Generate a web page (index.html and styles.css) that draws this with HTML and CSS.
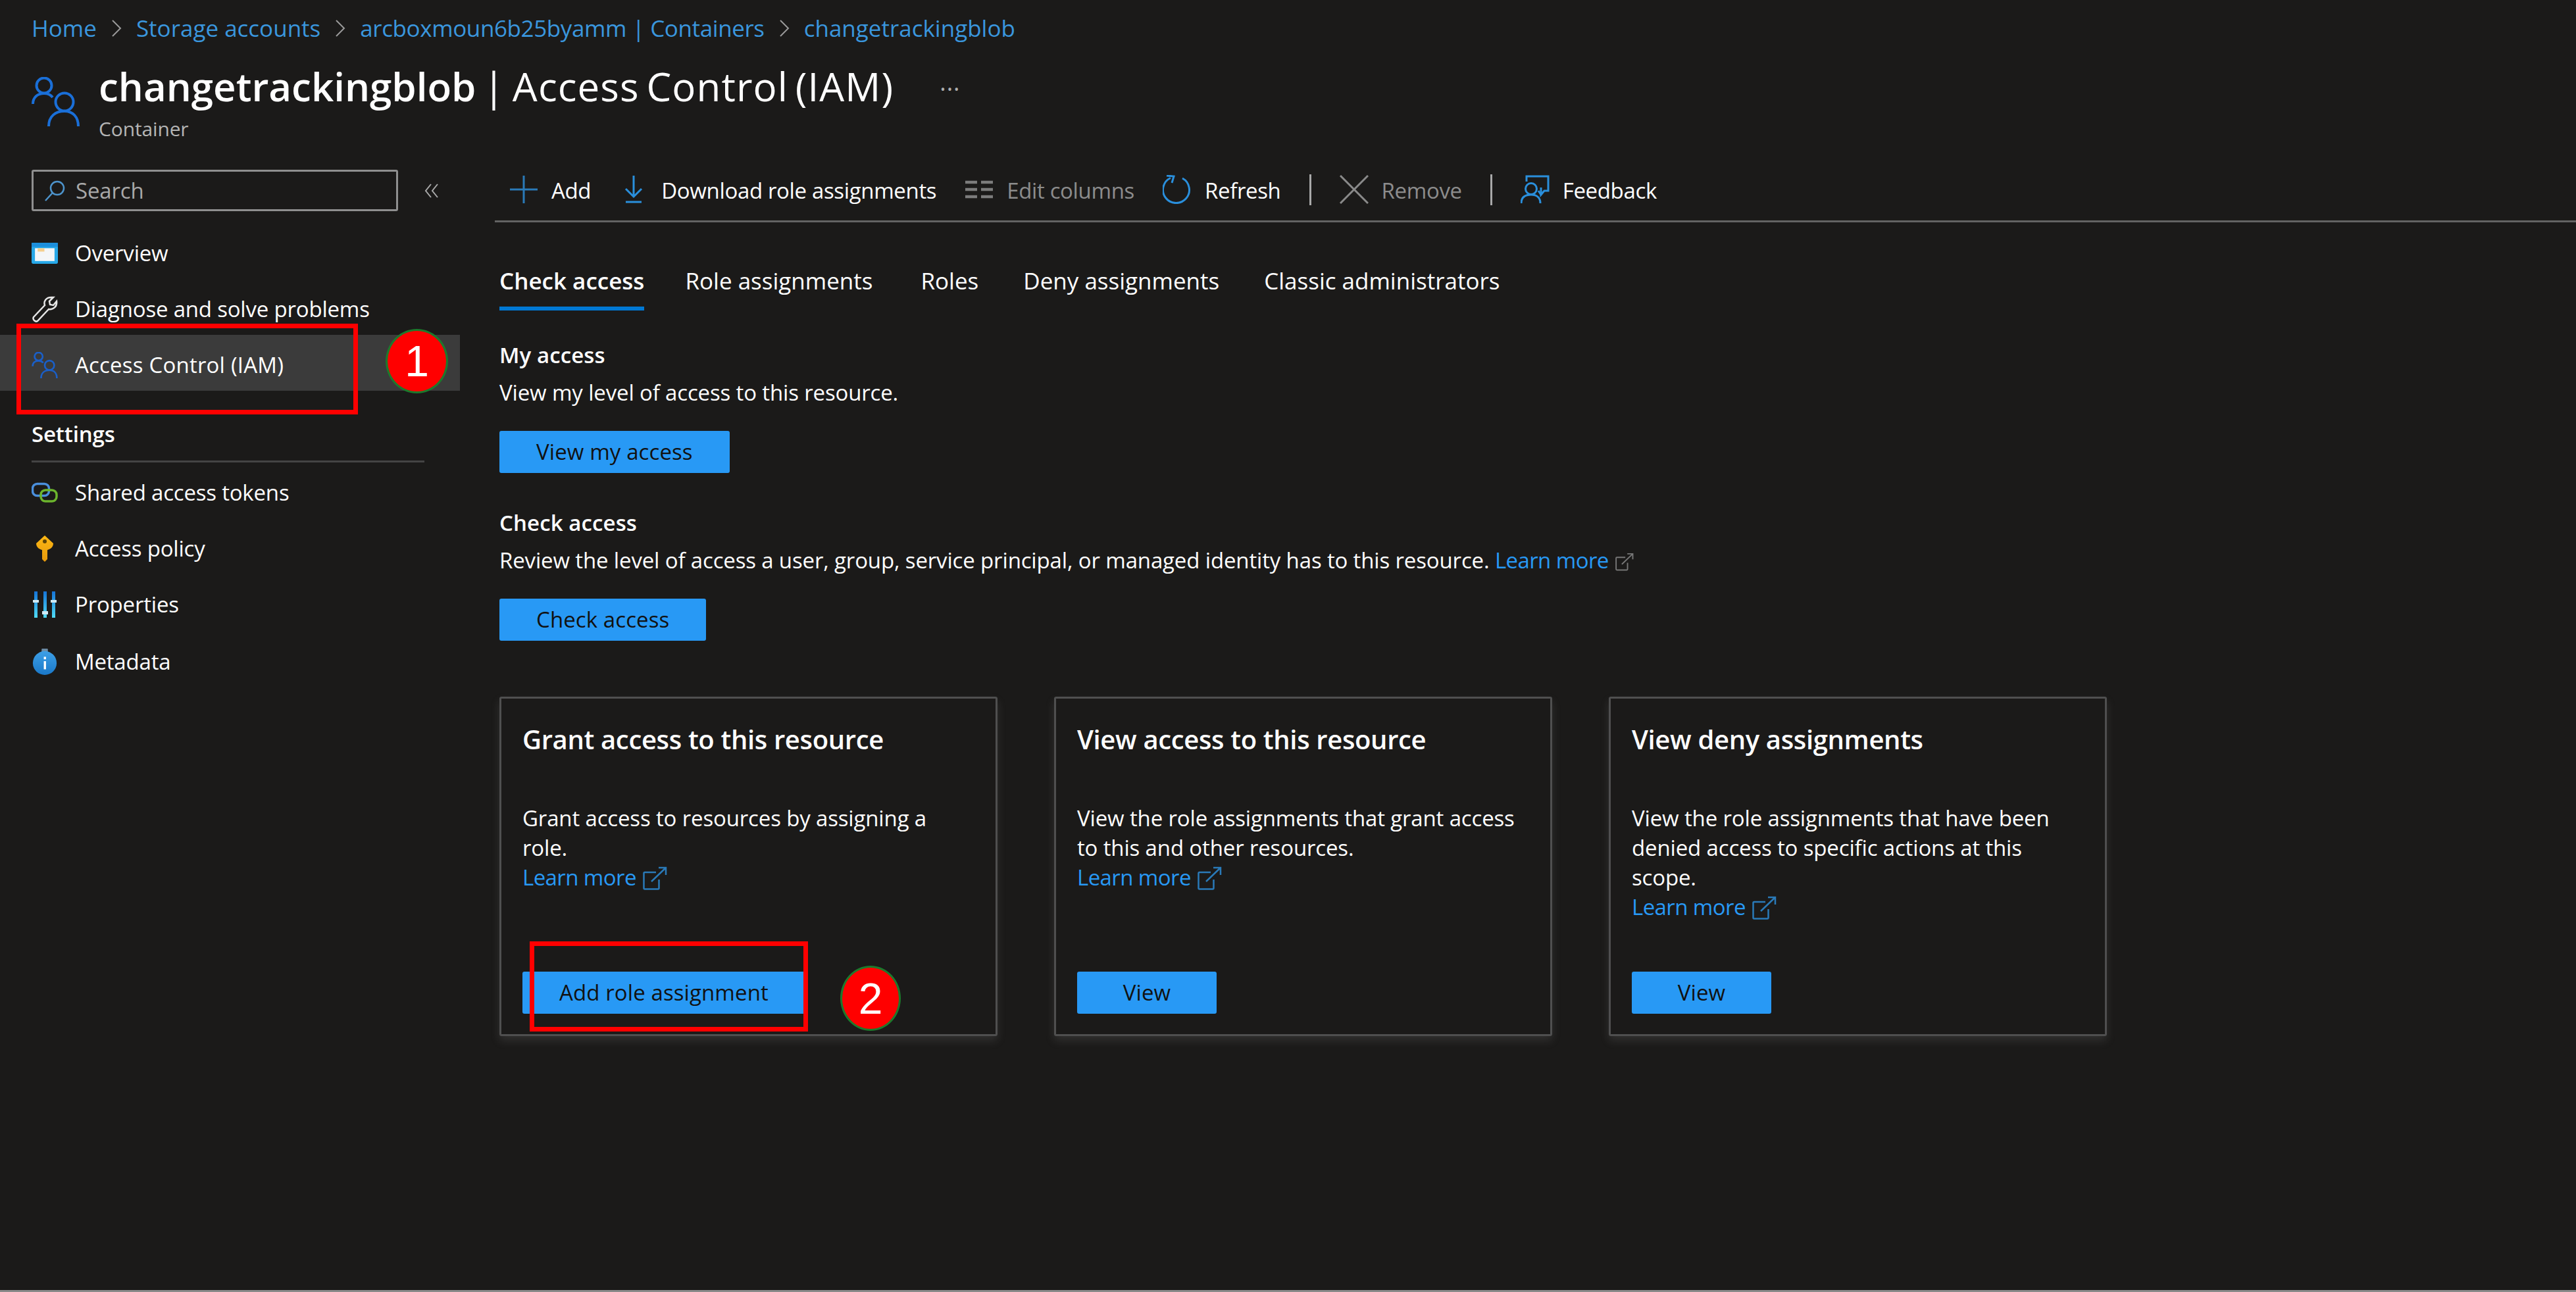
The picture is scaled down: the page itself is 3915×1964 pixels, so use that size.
FILE: index.html
```html
<!DOCTYPE html>
<html lang="en">
<head>
<meta charset="utf-8">
<title>changetrackingblob | Access Control (IAM)</title>
<link rel="stylesheet" href="styles.css">
</head>
<body>
<svg class="defs" width="0" height="0" aria-hidden="true">
  <defs>
    <symbol id="people" viewBox="0 0 73 75">
      <circle cx="19" cy="13" r="11.5"/>
      <path d="M2 41C2 31 9 25 19 25C25 25 29 27 32 31"/>
      <circle cx="50" cy="38" r="13.5"/>
      <path d="M26 75C26 60 36 52 50 52C63 52 71 61 71 75"/>
    </symbol>
    <symbol id="ext" viewBox="0 0 37 36">
      <path d="M20 9H3a1.500 1.500 0 0 0-1.500 1.500V33a1.500 1.500 0 0 0 1.500 1.500H23a1.500 1.500 0 0 0 1.500-1.500V20"/>
      <path d="M13 23L35 2M24 2H35V13"/>
    </symbol>
    <symbol id="chev" viewBox="0 0 16 28">
      <path d="M2 2L14 14L2 26"/>
    </symbol>
    <linearGradient id="bar" x1="0" y1="0" x2="0" y2="1">
      <stop offset="0" stop-color="#1573d6"/>
      <stop offset="1" stop-color="#4fdcf5"/>
    </linearGradient>
    <linearGradient id="gold" x1="0" y1="0" x2="0" y2="1">
      <stop offset="0" stop-color="#fcb714"/>
      <stop offset="1" stop-color="#e89a0c"/>
    </linearGradient>
    <linearGradient id="info" x1="0" y1="0" x2="0" y2="1">
      <stop offset="0" stop-color="#3d9fe6"/>
      <stop offset="1" stop-color="#1a78c8"/>
    </linearGradient>
  </defs>
</svg>

<div class="page">
  <nav class="crumbs">
    <a class="crumb">Home</a>
    <svg class="chev"><use href="#chev"/></svg>
    <a class="crumb">Storage accounts</a>
    <svg class="chev"><use href="#chev"/></svg>
    <a class="crumb crumb-long">arcboxmoun6b25byamm | Containers</a>
    <svg class="chev"><use href="#chev"/></svg>
    <a class="crumb">changetrackingblob</a>
  </nav>

  <header class="head">
    <svg class="head-icon"><use href="#people"/></svg>
    <div class="head-text">
      <div class="title-row">
        <h1 class="title"><b class="title-strong">changetrackingblob</b><span class="title-tail"> | Access Control (IAM)</span></h1>
        <span class="more">···</span>
      </div>
      <div class="subtitle">Container</div>
    </div>
  </header>

  <div class="body">
    <aside class="side">
      <div class="search-row">
        <div class="search">
          <svg class="search-icon" viewBox="0 0 32 32"><circle cx="20" cy="12" r="10"/><path d="M13 19L2 31"/></svg>
          <span>Search</span>
        </div>
        <svg class="collapse" viewBox="0 0 22 24"><path d="M10 2L2 12L10 22M20 2L12 12L20 22"/></svg>
      </div>

      <ul class="menu menu-top">
        <li class="item">
          <svg class="ico" viewBox="0 0 39 31"><rect width="39" height="31" rx="2" fill="#27a8e8"/><rect width="39" height="6" fill="#1c8fdc"/><rect x="5" y="8" width="29" height="19" fill="#f4f6f8"/><rect x="9" y="8" width="10" height="5" fill="#f5cf8e"/></svg>
          <span>Overview</span>
        </li>
        <li class="item">
          <svg class="ico ico-wrench" viewBox="0 0 40 40"><path d="M3 32L20 14C18 8 22 2 30 2L33 2L27 8L28 13L33 14L38 8C39 16 33 21 26 20L9 38C6 40 1 36 3 32Z"/></svg>
          <span>Diagnose and solve problems</span>
        </li>
        <li class="item item-active">
          <svg class="ico ico-people"><use href="#people"/></svg>
          <span>Access Control (IAM)</span>
        </li>
      </ul>

      <h2 class="side-head">Settings</h2>
      <ul class="menu">
        <li class="item">
          <svg class="ico" viewBox="0 0 40 30"><rect x="1.500" y="1.500" width="25" height="18" rx="7" class="link-blue"/><rect x="14" y="11" width="24" height="17" rx="7" class="link-green"/></svg>
          <span>Shared access tokens</span>
        </li>
        <li class="item">
          <svg class="ico" viewBox="0 0 40 40"><path d="M20 0L33 12C33 18 28 21 24 22V36L20 40L16 36V22C12 21 7 18 7 12Z" fill="url(#gold)"/><circle cx="20" cy="9" r="3" fill="#5c4306"/></svg>
          <span>Access policy</span>
        </li>
        <li class="item">
          <svg class="ico" viewBox="0 0 40 40"><rect x="4" y="0" width="5" height="40" fill="url(#bar)"/><rect x="18" y="0" width="5" height="40" fill="url(#bar)"/><rect x="31" y="0" width="5" height="40" fill="url(#bar)"/><rect x="2" y="13" width="9" height="4" fill="#cfeaf5"/><rect x="16" y="30" width="9" height="5" fill="#cfeaf5"/><rect x="29" y="13" width="9" height="4" fill="#cfeaf5"/></svg>
          <span>Properties</span>
        </li>
        <li class="item item-last">
          <svg class="ico" viewBox="0 0 40 42"><rect x="15" y="0" width="10" height="6" rx="1" fill="#6b8ba5"/><circle cx="20" cy="23" r="19" fill="url(#info)"/><rect x="18.500" y="20" width="3.500" height="13" fill="#fff"/><rect x="18.500" y="13" width="3.500" height="4" fill="#fff"/></svg>
          <span>Metadata</span>
        </li>
      </ul>
    </aside>

    <main class="main">
      <div class="toolbar">
        <button class="tool">
          <svg class="tool-ico ico-plus" viewBox="0 0 44 44"><path d="M22 1V43M1 22H43"/></svg>
          <span>Add</span>
        </button>
        <button class="tool">
          <svg class="tool-ico ico-down" viewBox="0 0 44 44"><path d="M22 1V33M10 21L22 33L34 21M10 41H34"/></svg>
          <span>Download role assignments</span>
        </button>
        <button class="tool tool-off">
          <svg class="tool-ico ico-cols" viewBox="0 0 44 44"><path d="M1 11H19M25 11H43M1 22H19M25 22H43M1 33H19M25 33H43"/></svg>
          <span>Edit columns</span>
        </button>
        <button class="tool">
          <svg class="tool-ico ico-refresh" viewBox="0 0 44 44"><path d="M30 5A20 20 0 1 1 12 4.500M14 12L17 2L6 1"/></svg>
          <span>Refresh</span>
        </button>
        <span class="tool-sep"></span>
        <button class="tool tool-off">
          <svg class="tool-ico ico-x" viewBox="0 0 44 44"><path d="M1 1L43 43M43 1L1 43"/></svg>
          <span>Remove</span>
        </button>
        <span class="tool-sep"></span>
        <button class="tool">
          <svg class="tool-ico ico-fb" viewBox="0 0 44 44"><path d="M9 10V2H42V24H36L31 30V19"/><path d="M27 24L31 30"/><circle cx="16" cy="21" r="8.500"/><path d="M1 43C1 34 7 30 16 30C24 30 30 34 30 43"/></svg>
          <span>Feedback</span>
        </button>
      </div>

      <div class="content">
        <div class="tabs">
          <span class="tab tab-on">Check access</span>
          <span class="tab tab-role">Role assignments</span>
          <span class="tab">Roles</span>
          <span class="tab">Deny assignments</span>
          <span class="tab">Classic administrators</span>
        </div>

        <section class="block block-my">
          <h3 class="block-title">My access</h3>
          <p class="block-text">View my level of access to this resource.</p>
          <button class="btn btn-block">View my access</button>
        </section>

        <section class="block block-check">
          <h3 class="block-title">Check access</h3>
          <p class="block-text">Review the level of access a user, group, service principal, or managed identity has to this resource. <a class="link">Learn more</a><svg class="ext ext-small"><use href="#ext"/></svg></p>
          <button class="btn btn-block">Check access</button>
        </section>

        <div class="cards">
          <article class="card">
            <h3 class="card-title">Grant access to this resource</h3>
            <p class="card-text">Grant access to resources by assigning a<br>role.<br><a class="link">Learn more</a><svg class="ext"><use href="#ext"/></svg></p>
            <button class="btn btn-card">Add role assignment</button>
          </article>
          <article class="card">
            <h3 class="card-title">View access to this resource</h3>
            <p class="card-text">View the role assignments that grant access<br>to this and other resources.<br><a class="link">Learn more</a><svg class="ext"><use href="#ext"/></svg></p>
            <button class="btn btn-card btn-view">View</button>
          </article>
          <article class="card">
            <h3 class="card-title">View deny assignments</h3>
            <p class="card-text">View the role assignments that have been<br>denied access to specific actions at this<br>scope.<br><a class="link">Learn more</a><svg class="ext"><use href="#ext"/></svg></p>
            <button class="btn btn-card btn-view">View</button>
          </article>
        </div>
      </div>
    </main>
  </div>

  <div class="mark mark-one"></div>
  <div class="badge badge-one">1</div>
  <div class="mark mark-two"></div>
  <div class="badge badge-two">2</div>
  <div class="bottom-edge"></div>
</div>
</body>
</html>
```

FILE: styles.css
```css
* { box-sizing: border-box; }
html, body { margin: 0; padding: 0; }
body {
  background: #1b1a19;
  color: #fff;
  font-family: "Open Sans", "Noto Sans", "Liberation Sans", sans-serif;
  font-size: 33px;
  letter-spacing: -0.15px;
  line-height: 44px;
}
.defs { position: absolute; }
.page { position: relative; width: 3915px; height: 1964px; overflow: hidden; }
ul { list-style: none; margin: 0; padding: 0; }
h1, h2, h3, p { margin: 0; }
button { font: inherit; letter-spacing: inherit; border: 0; padding: 0; background: none; color: inherit; }

.crumbs { display: flex; align-items: center; gap: 22px; padding: 21px 0 0 48px; height: 65px; font-size: 35px; letter-spacing: 0; }
.crumb { color: #3a96dd; }
.crumb-long { letter-spacing: -0.4px; }
.chev { width: 16px; height: 28px; fill: none; stroke: #9a9a9a; stroke-width: 2; }

.head { display: flex; margin-top: 34px; padding-left: 48px; height: 117px; }
.head-icon { width: 73px; height: 75px; margin-top: 18px; margin-right: 29px; fill: none; stroke: #1a6fd8; stroke-width: 4; flex: none; }
.title-row { display: flex; align-items: center; height: 72px; }
.title { margin-top: -8px; font-size: 60px; line-height: 72px; font-weight: 400; letter-spacing: 0; white-space: nowrap; }
.title-strong { font-weight: 600; }
.title-tail { letter-spacing: 1.1px; word-spacing: -6px; }
.more { margin-left: 70px; color: #b0b0b0; font-size: 36px; letter-spacing: 1px; }
.subtitle { margin-top: 5px; font-size: 30px; line-height: 40px; color: #b5b5b5; }

.body { display: flex; }
.side { width: 699px; flex: none; }
.search-row { display: flex; align-items: center; margin-top: 42px; padding-left: 48px; }
.search { display: flex; align-items: center; gap: 16px; width: 557px; height: 63px; padding-left: 16px; border: 3px solid #8f8f8f; border-radius: 3px; color: #a8a8a8; }
.search-icon { width: 32px; height: 32px; fill: none; stroke: #4d94cc; stroke-width: 2.500; }
.collapse { width: 22px; height: 24px; margin-left: 40px; fill: none; stroke: #aaa; stroke-width: 2; }

.menu-top { margin-top: 18px; }
.item { display: flex; align-items: center; gap: 26px; height: 85px; padding-left: 48px; padding-top: 6px; white-space: nowrap; letter-spacing: -0.2px; }
.item-active { background: #3b3b3b; letter-spacing: 0.2px; }
.item-last { padding-top: 10px; }
.ico { width: 40px; height: 40px; flex: none; }
.ico-wrench { fill: none; stroke: #e6e6e6; stroke-width: 2.500; }
.ico-people { fill: none; stroke: #1a5fc8; stroke-width: 5; }
.link-blue { fill: none; stroke: #4a8fdc; stroke-width: 3.500; }
.link-green { fill: none; stroke: #6cb52d; stroke-width: 3.500; }
.side-head { margin-top: 44px; margin-left: 48px; width: 597px; height: 65px; padding-bottom: 19px; border-bottom: 3px solid #444; font-size: 33px; line-height: 44px; font-weight: 600; }

.main { flex: 1; min-width: 0; margin-left: 53px; }
.toolbar { display: flex; align-items: center; gap: 43px; height: 122px; padding: 42px 0 17px 22px; border-bottom: 3px solid #636363; letter-spacing: -0.35px; }
.tool { display: flex; align-items: center; gap: 20px; height: 60px; padding-top: 3px; white-space: nowrap; }
.tool-off { color: #8c8c8c; }
.tool-ico { width: 44px; height: 44px; margin-top: -3px; fill: none; stroke-width: 2.500; flex: none; }
.ico-plus { stroke: #2a7ab8; stroke-width: 3; }
.ico-down { stroke: #2a8fdc; stroke-width: 3; }
.ico-cols { stroke: #7c7c7c; stroke-width: 4.500; }
.ico-refresh { stroke: #2a8fdc; stroke-width: 3; }
.ico-x { stroke: #8a8a8a; stroke-width: 3; }
.ico-fb { stroke: #2a8fdc; stroke-width: 3; }
.tool-sep { width: 3px; height: 47px; background: #a8a8a8; }

.content { padding-left: 7px; }
.tabs { display: flex; gap: 68px; margin-top: 67px; font-size: 35px; letter-spacing: 0; }
.tab { height: 67px; white-space: nowrap; }
.tab-on { font-weight: 600; margin-right: -6px; border-bottom: 6px solid #0078d4; padding-bottom: 17px; }
.tab-role { margin-right: 5px; }

.block { display: flex; flex-direction: column; align-items: flex-start; }
.block-my { margin-top: 46px; }
.block-check { margin-top: 54px; }
.block-title { font-size: 33px; line-height: 44px; font-weight: 600; letter-spacing: 0.1px; }
.block-text { margin-top: 13px; white-space: nowrap; }
.link { color: #2899f5; letter-spacing: -0.6px; }
.btn { display: block; height: 64px; line-height: 62px; background: #2899f5; color: #111; border-radius: 3px; white-space: nowrap; text-align: center; letter-spacing: 0.1px; }
.btn-block { margin-top: 36px; padding: 0 56px; }

.cards { display: flex; gap: 86px; margin-top: 85px; }
.card { display: flex; flex-direction: column; align-items: flex-start; width: 757px; height: 516px; padding: 34px 32px 31px; border: 3px solid #4f4f4f; border-radius: 3px; box-shadow: 0 7px 14px rgba(150, 150, 150, .18); }
.card-title { font-size: 40px; line-height: 56px; font-weight: 600; letter-spacing: -0.35px; }
.card-text { margin-top: 69px; line-height: 45px; white-space: nowrap; }
.btn-card { margin-top: auto; padding: 0 56px; }
.btn-view { width: 212px; padding: 0; }
.ext { display: inline-block; width: 37px; height: 36px; margin-left: 10px; vertical-align: -7px; fill: none; stroke: #2a7ab8; stroke-width: 2.500; }
.ext-small { width: 28px; height: 28px; stroke: #777; vertical-align: -4px; }

.mark { position: absolute; border: 7px solid #f00; }
.mark-one { left: 25px; top: 492px; width: 519px; height: 138px; }
.mark-two { left: 805px; top: 1431px; width: 423px; height: 137px; }
.badge { position: absolute; display: flex; align-items: center; justify-content: center; border: 3px solid #1c7a2c; border-radius: 50%; background: #f00; color: #fff; font-family: "Liberation Sans", sans-serif; font-size: 66px; letter-spacing: 0; }
.badge-one { left: 586px; top: 500px; width: 95px; height: 98px; }
.badge-two { left: 1277px; top: 1468px; width: 92px; height: 99px; }
.bottom-edge { position: absolute; left: 0; right: 0; bottom: 0; height: 3px; background: #8a8a8a; }
```
